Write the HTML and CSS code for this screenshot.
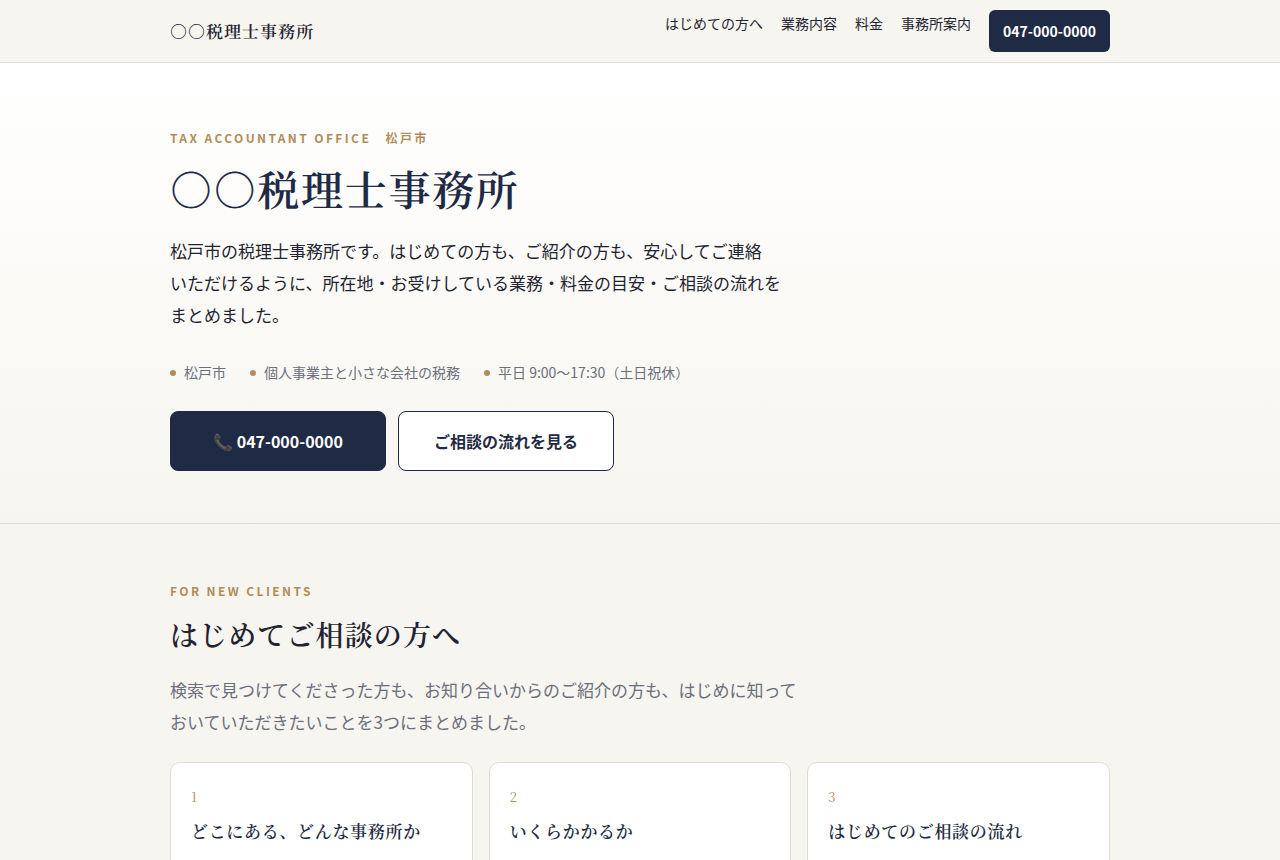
FILE: index.html
```html
<!DOCTYPE html>
<html lang="ja">
<head>
    <meta charset="UTF-8">
    <meta name="viewport" content="width=device-width, initial-scale=1.0">
    <title>○○税理士事務所</title>
    <link rel="stylesheet" href="styles.css">
</head>
<body>
    <header class="header">
        <div class="wrap header-inner">
            <a class="logo" href="#top">○○税理士事務所</a>
            <nav class="nav">
                <a href="#first">はじめての方へ</a>
                <a href="#service">業務内容</a>
                <a href="#price">料金</a>
                <a href="#office">事務所案内</a>
                <a class="nav-tel" href="tel:0470000000">047-000-0000</a>
            </nav>
        </div>
    </header>

    <main id="top">
        <section class="hero">
            <div class="wrap">
                <p class="label">TAX ACCOUNTANT OFFICE　松戸市</p>
                <h1>○○税理士事務所</h1>
                <p class="hero-text">松戸市の税理士事務所です。はじめての方も、ご紹介の方も、安心してご連絡<br>いただけるように、所在地・お受けしている業務・料金の目安・ご相談の流れを<br>まとめました。</p>
                <ul class="points">
                    <li>松戸市</li>
                    <li>個人事業主と小さな会社の税務</li>
                    <li>平日 9:00〜17:30（土日祝休）</li>
                </ul>
                <div class="buttons">
                    <a class="btn btn-main" href="tel:0470000000">📞 047-000-0000</a>
                    <a class="btn" href="#flow">ご相談の流れを見る</a>
                </div>
            </div>
        </section>

        <section class="section" id="first">
            <div class="wrap">
                <p class="label">FOR NEW CLIENTS</p>
                <h2>はじめてご相談の方へ</h2>
                <p class="lead">検索で見つけてくださった方も、お知り合いからのご紹介の方も、はじめに知って<br>おいていただきたいことを3つにまとめました。</p>
                <div class="cards">
                    <article class="card">
                        <p class="num">1</p>
                        <h3>どこにある、どんな事務所か</h3>
                    </article>
                    <article class="card">
                        <p class="num">2</p>
                        <h3>いくらかかるか</h3>
                    </article>
                    <article class="card">
                        <p class="num">3</p>
                        <h3>はじめてのご相談の流れ</h3>
                    </article>
                </div>
            </div>
        </section>
    </main>
</body>
</html>
```

FILE: styles.css
```css
:root {
    --navy: #1f2a44;
    --gold: #b08d57;
    --ink: #1f2430;
    --muted: #6b6f7b;
    --line: #e0dcd3;
    --bg: #f7f5f0;
    --serif: "Noto Serif CJK JP", "Noto Serif JP", "Liberation Serif", serif;
}
* {
    box-sizing: border-box;
    margin: 0;
    padding: 0;
}
body {
    background: var(--bg);
    color: var(--ink);
    font-family: "Noto Sans CJK JP", sans-serif;
    font-size: 17px;
    line-height: 32px;
}
a {
    color: inherit;
    text-decoration: none;
}
.wrap {
    max-width: 980px;
    margin: 0 auto;
    padding: 0 20px;
}

/* header */
.header {
    border-bottom: 1px solid var(--line);
}
.header-inner {
    display: flex;
    align-items: center;
    justify-content: space-between;
    padding-top: 10px;
    padding-bottom: 10px;
}
.logo {
    font-family: var(--serif);
    font-weight: 600;
    letter-spacing: 0.06em;
    text-rendering: geometricPrecision;
}
.nav {
    display: flex;
    align-items: flex-start;
    gap: 18px;
    font-size: 14px;
    line-height: 26px;
}
.nav-tel {
    padding: 8px 14px;
    border-radius: 6px;
    background: var(--navy);
    color: #fff;
    font-weight: 700;
}

/* hero */
.hero {
    padding: 64px 0 52px;
    border-bottom: 1px solid var(--line);
    background: linear-gradient(#fff, var(--bg));
}
.label {
    color: var(--gold);
    font-size: 12px;
    font-weight: 700;
    letter-spacing: 0.2em;
    line-height: 22px;
}
h1, h2, h3 {
    font-family: var(--serif);
    font-weight: 600;
    letter-spacing: 0.04em;
}
h1 {
    margin: 8px 0 14px;
    color: var(--navy);
    font-size: 42px;
    line-height: 64px;
    text-rendering: geometricPrecision;
}
.points {
    display: flex;
    flex-wrap: wrap;
    gap: 8px 24px;
    margin: 26px 0 24px;
    color: var(--muted);
    font-size: 14px;
    line-height: 30px;
    list-style: none;
}
.points li {
    display: flex;
    align-items: center;
    gap: 8px;
}
.points li::before {
    content: "";
    width: 6px;
    height: 6px;
    margin-top: 2px;
    border-radius: 50%;
    background: var(--gold);
}
.buttons {
    display: flex;
    flex-wrap: wrap;
    gap: 12px;
}
.btn {
    min-width: 216px;
    padding: 13px 24px;
    border: 1px solid var(--navy);
    border-radius: 8px;
    background: #fff;
    color: var(--navy);
    font-size: 16px;
    font-weight: 700;
    text-align: center;
}
.btn-main {
    background: var(--navy);
    color: #fff;
}

/* sections */
.section {
    padding: 56px 0;
}
h2 {
    margin: 10px 0 18px;
    font-size: 28px;
    line-height: 44px;
}
.lead {
    margin-bottom: 24px;
    color: var(--muted);
}
.cards {
    display: grid;
    grid-template-columns: repeat(3, 1fr);
    gap: 16px;
}
.card {
    padding: 20px;
    border: 1px solid var(--line);
    border-radius: 10px;
    background: #fff;
}
.num {
    color: var(--gold);
    font-family: var(--serif);
    font-size: 13px;
    line-height: 28px;
}
h3 {
    margin: 6px 0 8px;
    color: var(--navy);
    font-size: 17px;
    line-height: 28px;
}

@media (max-width: 768px) {
    .header-inner {
        flex-direction: column;
        gap: 8px;
    }
    .nav {
        flex-wrap: wrap;
        justify-content: center;
    }
    h1 {
        font-size: 32px;
        line-height: 48px;
    }
    .cards {
        grid-template-columns: 1fr;
    }
}
```
